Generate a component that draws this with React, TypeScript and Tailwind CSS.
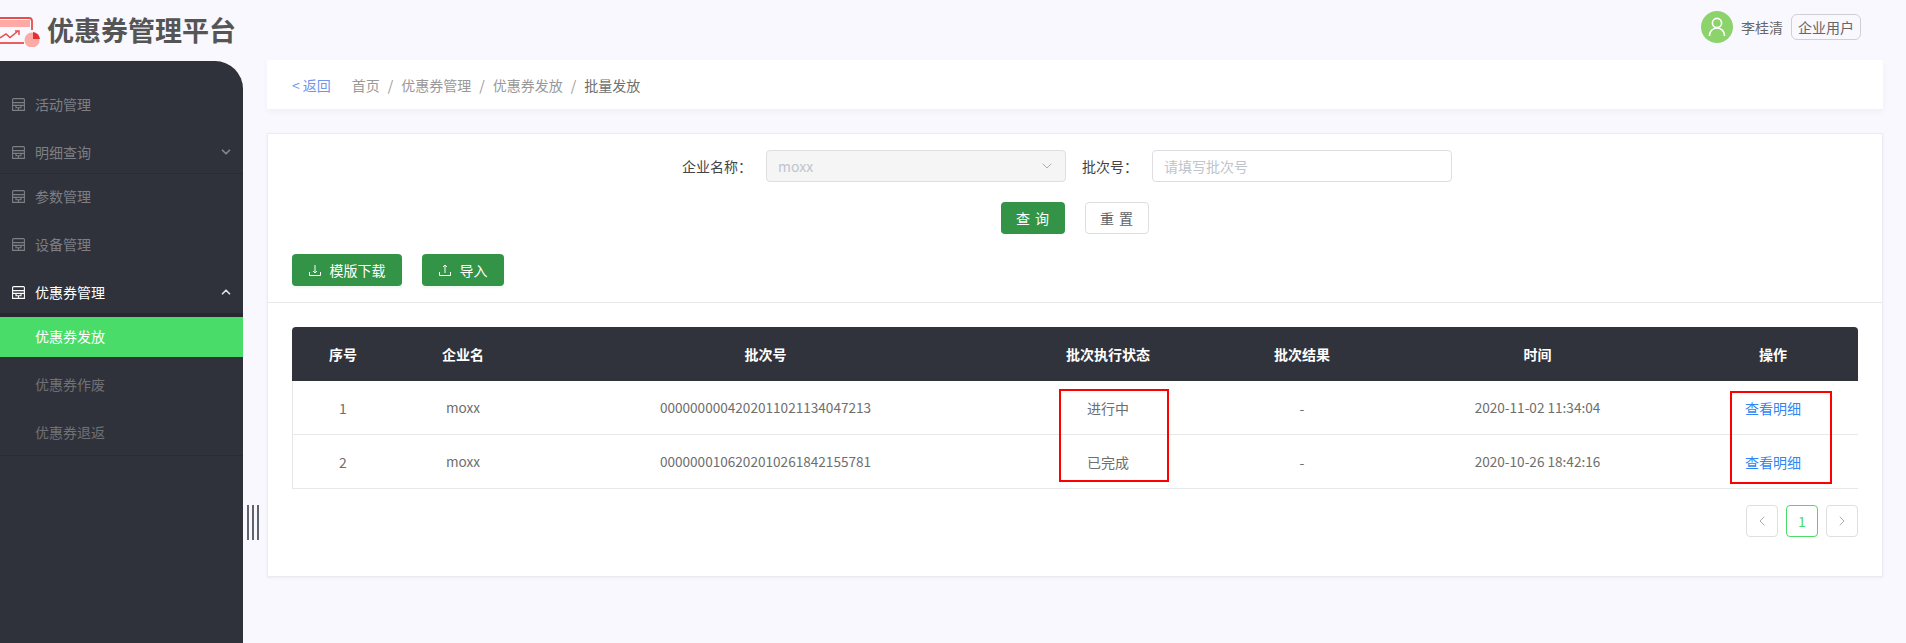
import { ChevronDown, ChevronLeft, ChevronRight, ChevronUp } from "lucide-react";

const FONT = "font-['Noto_Sans_CJK_SC','Liberation_Sans',sans-serif]";

const rows = [
  { no: 1, name: "moxx", batch: "0000000004202011021134047213", status: "进行中", result: "-", time: "2020-11-02 11:34:04" },
  { no: 2, name: "moxx", batch: "0000000106202010261842155781", status: "已完成", result: "-", time: "2020-10-26 18:42:16" },
];

const COLS = "grid grid-cols-[102px_138px_467px_218px_170px_301px_170px]";

function MenuIcon() {
  return (
    <svg className="w-[13px] h-[13px] shrink-0" viewBox="0 0 13 13" fill="none" stroke="currentColor" strokeWidth="1.1">
      <path d="M.6 12.4V1.6a1 1 0 0 1 1-1h9.8a1 1 0 0 1 1 1v10.8z" />
      <path d="M.6 4.6h11.8M.6 7.4h11.8" />
      <path d="M4 7.4v2.4h5V7.4M6.5 9.8v2.6" />
    </svg>
  );
}

function TrayIcon({ up }: { up?: boolean }) {
  return (
    <svg className="w-3 h-3 shrink-0" viewBox="0 0 12 12" fill="none" stroke="currentColor" strokeWidth="1">
      <path d="M.5 8v3.5h11V8" />
      {up ? <path d="M6 9V1M4 3l2-2 2 2" /> : <path d="M6 1v8M4 7l2 2 2-2" />}
    </svg>
  );
}

function MenuItem({ label, active, open, hasChildren }: { label: string; active?: boolean; open?: boolean; hasChildren?: boolean }) {
  return (
    <div className={`h-10 pl-3 pr-[10px] pb-[2px] flex items-center gap-[10px] text-sm ${active ? "text-white" : "text-[#7d7f85]"}`}>
      <MenuIcon />
      <span className="flex-1">{label}</span>
      {hasChildren &&
        (open ? (
          <ChevronUp size={14} strokeWidth={3} className="text-[#e0e0e0]" />
        ) : (
          <ChevronDown size={14} strokeWidth={3} className="text-[#85878c]" />
        ))}
    </div>
  );
}

function Sidebar() {
  return (
    <aside className="w-[243px] mt-px shrink-0 bg-[#2f323a] rounded-tr-[28px] pt-6">
      <div className="mb-2">
        <MenuItem label="活动管理" />
      </div>
      <div className="border-b border-[#292b32] mb-[3px]">
        <MenuItem label="明细查询" hasChildren />
      </div>
      <div className="mb-2">
        <MenuItem label="参数管理" />
      </div>
      <div className="mb-2">
        <MenuItem label="设备管理" />
      </div>
      <MenuItem label="优惠券管理" active open hasChildren />
      <div className="border-t-4 border-t-[#27292f] border-b border-b-[#2a2c33] pb-[2px] text-sm">
        <div className="h-10 mb-2 pl-[35px] pb-[2px] flex items-center bg-[#4adc68] text-white">优惠券发放</div>
        <div className="h-10 mb-2 pl-[35px] pb-[2px] flex items-center text-[#6f7176]">优惠券作废</div>
        <div className="h-10 pl-[35px] pb-[2px] flex items-center text-[#6f7176]">优惠券退返</div>
      </div>
    </aside>
  );
}

function Header() {
  return (
    <header className="h-[60px] flex items-center justify-between pr-[45px]">
      <div className="flex items-center pb-[2px]">
        <svg className="w-[41px] h-[32px] shrink-0 translate-y-[2px]" viewBox="0 0 41 32" fill="none">
          <path d="M0 3h29a3 3 0 0 1 3 3v9" stroke="#ea4c4c" strokeWidth="1.8" />
          <rect x="0" y="5" width="30" height="7" fill="#fbaaa6" />
          <path d="M0 28h24" stroke="#ea4c4c" strokeWidth="1.8" />
          <path d="M0 23l6-4 4 3.5 8-6.5" stroke="#ea4c4c" strokeWidth="1.5" />
          <path d="M15 16h4v4" stroke="#ea4c4c" strokeWidth="1.5" />
          <circle cx="32" cy="25" r="7.5" fill="#fbaaa6" />
          <path d="M33 17a7.5 7.5 0 0 1 7 7h-7z" fill="#e42f33" />
        </svg>
        <h1 className="ml-[6px] text-[27px] font-bold text-[#555555] leading-none">优惠券管理平台</h1>
      </div>
      <div className="flex items-center pb-[6px] text-sm text-[#666666]">
        <div className="w-8 h-8 rounded-full bg-[#8cd36c] flex items-center justify-center">
          <svg className="w-[18px] h-[20px]" viewBox="0 0 18 20" fill="none" stroke="white" strokeWidth="1.6">
            <circle cx="9" cy="6" r="4.6" />
            <path d="M1.5 19c0-4.5 3-8 7.5-8s7.5 3.5 7.5 8" />
          </svg>
        </div>
        <span className="ml-2">李桂清</span>
        <span className="ml-2 h-[26px] w-[70px] flex items-center justify-center border border-[#cfcfd4] rounded-[6px]">企业用户</span>
      </div>
    </header>
  );
}

function Breadcrumb() {
  return (
    <div className="h-[49px] bg-white shadow-[0_3px_6px_rgba(0,0,0,0.04)] pl-[25px] flex items-center text-sm text-[#999999]">
      <a className="text-[#6f95ee] mr-[21px] flex gap-[3px]">
        <span>&lt;</span>
        <span>返回</span>
      </a>
      <span>首页</span>
      <span className="mx-2">/</span>
      <span>优惠券管理</span>
      <span className="mx-2">/</span>
      <span>优惠券发放</span>
      <span className="mx-2">/</span>
      <span className="text-[#707070]">批量发放</span>
    </div>
  );
}

function Filters() {
  return (
    <>
      <div className="pt-4 flex items-center text-sm">
        <label className="ml-[414px] w-[84px] text-[#444444]">企业名称：</label>
        <div className="w-[300px] h-[32px] pl-[11px] pr-[10px] flex items-center justify-between bg-[#f5f5f5] border border-[#dcdee2] rounded-[4px] text-[#c0c4cc]">
          <span>moxx</span>
          <ChevronDown size={16} strokeWidth={1.5} className="text-[#a8acb4]" />
        </div>
        <label className="ml-4 w-[70px] text-[#444444]">批次号：</label>
        <input
          readOnly
          placeholder="请填写批次号"
          className="w-[300px] h-[32px] px-[11px] bg-white border border-[#dcdee2] rounded-[4px] placeholder:text-[#c0c4cc] outline-none"
        />
      </div>
      <div className="mt-5 flex justify-center gap-5 text-sm tracking-[1px]">
        <button className="w-16 h-8 rounded-[4px] bg-[#339347] text-white">查 询</button>
        <button className="w-16 h-8 rounded-[4px] bg-white border border-[#dcdee2] text-[#606266]">重 置</button>
      </div>
      <div className="mt-5 pl-6 pb-4 flex gap-5 border-b border-[#e8e8e8] text-sm">
        <button className="w-[110px] h-8 rounded-[4px] bg-[#339347] text-white flex items-center justify-center gap-[9px] shadow-[0_2px_2px_rgba(51,147,71,0.08)]">
          <TrayIcon />
          模版下载
        </button>
        <button className="w-[82px] h-8 rounded-[4px] bg-[#339347] text-white flex items-center justify-center gap-[9px] shadow-[0_2px_2px_rgba(51,147,71,0.08)]">
          <TrayIcon up />
          导入
        </button>
      </div>
    </>
  );
}

function BatchTable() {
  return (
    <div className="relative mx-6 mt-6 w-[1566px] text-sm">
      <div className={`${COLS} h-[54px] pb-px items-center text-center bg-[#30333b] rounded-t-[4px] font-bold text-white`}>
        <div>序号</div>
        <div>企业名</div>
        <div>批次号</div>
        <div>批次执行状态</div>
        <div>批次结果</div>
        <div>时间</div>
        <div>操作</div>
      </div>
      <div className="border-l border-[#e8e8e8]">
        {rows.map((row) => (
          <div key={row.no} className={`${COLS} -ml-px h-[54px] items-center text-center border-b border-[#e8e8e8] text-[#6e6e6e]`}>
            <div>{row.no}</div>
            <div className="text-[13.6px]">{row.name}</div>
            <div className="text-[13.6px]">{row.batch}</div>
            <div>{row.status}</div>
            <div>{row.result}</div>
            <div className="text-[13.6px]">{row.time}</div>
            <a className="text-[#2f86f6]">查看明细</a>
          </div>
        ))}
      </div>
      {/* screenshot annotations */}
      <div className="absolute left-[767px] top-[62px] w-[110px] h-[93px] border-2 border-[#ff0000]" />
      <div className="absolute left-[1438px] top-[64px] w-[102px] h-[93px] border-2 border-[#ff0000]" />
      <div className="mt-4 flex justify-end gap-2">
        <div className="w-8 h-8 flex items-center justify-center border border-[#dfdfdf] rounded-[4px] text-[#a8acb4]">
          <ChevronLeft size={16} strokeWidth={1.5} />
        </div>
        <div className="w-8 h-8 flex items-center justify-center border border-[#4adc68] rounded-[4px] text-[#4adc68]">1</div>
        <div className="w-8 h-8 flex items-center justify-center border border-[#dfdfdf] rounded-[4px] text-[#a8acb4]">
          <ChevronRight size={16} strokeWidth={1.5} />
        </div>
      </div>
    </div>
  );
}

export default function App() {
  return (
    <div className={`relative h-[643px] overflow-hidden bg-[#f8f8fe] ${FONT}`}>
      <Header />
      <div className="flex h-[583px]">
        <Sidebar />
        <main className="flex-1 pl-6 pr-[23px]">
          <Breadcrumb />
          <section className="mt-6 h-[444px] bg-white border border-[#ececf0] shadow-[0_1px_3px_rgba(0,0,0,0.05)]">
            <Filters />
            <BatchTable />
          </section>
        </main>
      </div>
      {/* sidebar drag handle */}
      <div className="absolute left-[247px] top-[505px] flex gap-[3px]">
        <span className="w-[2px] h-[35px] bg-[#5f6470]" />
        <span className="w-[2px] h-[35px] bg-[#5f6470]" />
        <span className="w-[2px] h-[35px] bg-[#5f6470]" />
      </div>
    </div>
  );
}
